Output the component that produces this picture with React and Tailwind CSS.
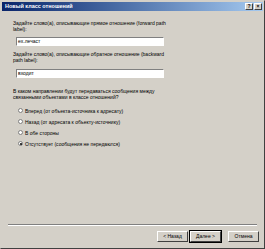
import React, { useState } from 'react';

const options = [
    'Вперед (от объекта-источника к адресату)',
    'Назад (от адресата к объекту-источнику)',
    'В обе стороны',
    'Отсутствует (сообщения не передаются)',
];

const Radio = ({ checked, label, onClick }) => (
    <div className="flex items-center h-[11px] pl-[5px]" onClick={onClick}>
        <span className="w-[5px] h-[5px] rounded-full bg-white border-[0.5px] border-[#808080] flex items-center justify-center">
            {checked && <span className="w-[2px] h-[2px] rounded-full bg-black" />}
        </span>
        <span className="ml-[2px] text-[5px] leading-[6px] text-black">{label}</span>
    </div>
);

const Button = ({ children, primary }) => (
    <div
        className={`w-[31px] h-[11px] flex items-center justify-center bg-[#d4d0c8] text-[5px] text-black border-[0.5px] border-t-white border-l-white border-r-[#404040] border-b-[#404040] ${primary ? 'outline outline-[0.5px] outline-black' : ''}`}
    >
        {children}
    </div>
);

const App = () => {
    const [direction, setDirection] = useState(3);

    return (
        <div
            className="w-[265px] h-[249px] bg-[#d4d0c8] flex flex-col border border-t-[#d4d0c8] border-l-[#d4d0c8] border-r-[#404040] border-b-[#404040] overflow-hidden"
            style={{ fontFamily: '"Liberation Sans", Arial, sans-serif' }}
        >
            {/* title bar */}
            <div className="h-[9px] mx-[1px] mt-[1px] bg-gradient-to-r from-[#0a246a] to-[#a6caf0] flex items-center justify-between pl-[3px] pr-[1px]">
                <span className="text-[5.5px] font-bold text-white leading-none">Новый класс отношений</span>
                <div className="flex gap-[1px]">
                    <span className="w-[8px] h-[7px] bg-[#d4d0c8] border-[0.5px] border-t-white border-l-white border-r-[#404040] border-b-[#404040] flex items-center justify-center text-[5px] font-bold leading-none">?</span>
                    <span className="w-[8px] h-[7px] bg-[#d4d0c8] border-[0.5px] border-t-white border-l-white border-r-[#404040] border-b-[#404040] flex items-center justify-center text-[5px] font-bold leading-none">×</span>
                </div>
            </div>

            {/* page */}
            <div className="flex-1 pl-[12px] pt-[9px]">
                <p className="w-[170px] text-[5px] leading-[6px] text-black">
                    Задайте слово(а), описывающие прямое отношение (forward path<br />label):
                </p>
                <div className="mt-[5px] ml-[3px] w-[148px] h-[9px] bg-white border-[0.5px] border-t-[#808080] border-l-[#808080] border-r-white border-b-white flex items-center pl-[1px] text-[5px] text-black">
                    ex.лечаст
                </div>

                <p className="mt-[5px] w-[170px] text-[5px] leading-[6px] text-black">
                    Задайте слово(а), описывающие обратное отношение (backward<br />path label):
                </p>
                <div className="mt-[6px] ml-[3px] w-[148px] h-[9px] bg-white border-[0.5px] border-t-[#808080] border-l-[#808080] border-r-white border-b-white flex items-center pl-[1px] text-[5px] text-black">
                    входит
                </div>

                <p className="mt-[10px] w-[170px] text-[5px] leading-[6px] text-black">
                    В каком направлении будут передаваться сообщения между<br />связанными объектами в классе отношений?
                </p>
                <div className="mt-[5px] flex flex-col">
                    {options.map((label, i) => (
                        <Radio key={i} label={label} checked={direction === i} onClick={() => setDirection(i)} />
                    ))}
                </div>
            </div>

            {/* separator + buttons */}
            <div className="mx-[7px] border-t-[0.5px] border-t-[#808080] border-b-[0.5px] border-b-white" />
            <div className="h-[22px] flex items-start justify-end pt-[5px] pr-[5px]">
                <div className="flex gap-[2px]">
                    <Button>&lt; Назад</Button>
                    <Button primary>Далее &gt;</Button>
                </div>
                <div className="ml-[7px]">
                    <Button>Отмена</Button>
                </div>
            </div>
        </div>
    );
};

export default App;
